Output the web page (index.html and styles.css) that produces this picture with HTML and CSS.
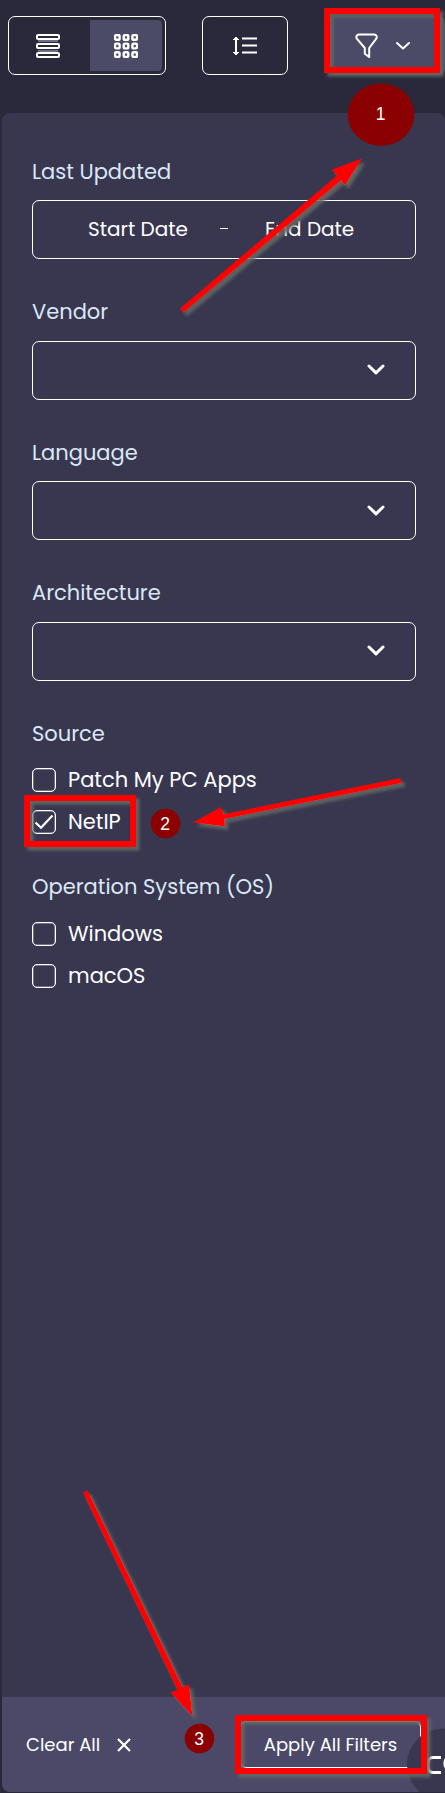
FILE: index.html
```html
<!DOCTYPE html>
<html lang="en">
<head>
<meta charset="utf-8">
<title>Filters</title>
<link rel="stylesheet" href="styles.css">
</head>
<body>
<div class="page">
  <header class="toolbar">
    <div class="toggle">
      <button class="segment" aria-label="List view">
        <svg width="24" height="24" viewBox="0 0 24 24"><g fill="none" stroke="#fff" stroke-width="2"><rect x="1" y="1" width="22" height="4" rx="1"/><rect x="1" y="10" width="22" height="4" rx="1"/><rect x="1" y="19" width="22" height="4" rx="1"/></g><path d="M2 7h20M2 17h20" stroke="#b4b2dc" stroke-width="1"/></svg>
      </button>
      <button class="segment active" aria-label="Grid view">
        <svg width="24" height="24" viewBox="0 0 24 24" fill="none" stroke="#fff" stroke-width="2.400"><rect x="1" y="1" width="4.6" height="4.8" rx="1.4"/><rect x="9.7" y="1" width="4.6" height="4.8" rx="1.4"/><rect x="18.4" y="1" width="4.6" height="4.8" rx="1.4"/><rect x="1" y="9.6" width="4.6" height="4.8" rx="1.4"/><rect x="9.7" y="9.6" width="4.6" height="4.8" rx="1.4"/><rect x="18.4" y="9.6" width="4.6" height="4.8" rx="1.4"/><rect x="1" y="18.2" width="4.6" height="4.8" rx="1.4"/><rect x="9.7" y="18.2" width="4.6" height="4.8" rx="1.4"/><rect x="18.4" y="18.2" width="4.6" height="4.8" rx="1.4"/></svg>
      </button>
    </div>
    <button class="density" aria-label="Row height">
      <svg width="26" height="20" viewBox="0 0 26 20" fill="none" stroke="#fff" stroke-width="2"><path d="M10 2.500H25M10 9.500H25M10 16.500H25M4 3v14"/><path d="M1 4L4 1l3 3M1 16l3 3 3-3" fill="#fff" stroke-width="1"/></svg>
    </button>
    <button class="filter" aria-label="Filter">
      <svg width="24" height="26" viewBox="0 0 24 26" fill="none" stroke="#fff" stroke-width="2" stroke-linejoin="round"><path d="M4 1.500h15c2.500 0 3.300 2.300 2.300 4.200L14.200 15v9l-4.400-3.200V15L1.800 5.700C.7 3.800 1.700 1.500 4 1.500z"/></svg>
      <svg width="16" height="10" viewBox="0 0 16 10" fill="none" stroke="#fff" stroke-width="2" stroke-linecap="round" stroke-linejoin="round"><path d="M2 2l6 5.600L14 2"/></svg>
    </button>
  </header>

  <main class="panel">
    <section class="group">
      <h2 class="label">Last Updated</h2>
      <div class="field dates"><span class="start">Start Date</span><span class="dash"></span><span class="end">End Date</span></div>
    </section>
    <section class="group">
      <h2 class="label">Vendor</h2>
      <div class="field select"><svg class="chevron" viewBox="0 0 18 11"><path d="M2 2l7 6.800L16 2"/></svg></div>
    </section>
    <section class="group">
      <h2 class="label">Language</h2>
      <div class="field select"><svg class="chevron" viewBox="0 0 18 11"><path d="M2 2l7 6.800L16 2"/></svg></div>
    </section>
    <section class="group">
      <h2 class="label">Architecture</h2>
      <div class="field select"><svg class="chevron" viewBox="0 0 18 11"><path d="M2 2l7 6.800L16 2"/></svg></div>
    </section>
    <section class="group checks">
      <h2 class="label">Source</h2>
      <div class="option"><span class="box"></span><span class="name">Patch My PC Apps</span></div>
      <div class="option"><span class="box"><svg width="20" height="18" viewBox="0 0 20 18" fill="none" stroke="#fff" stroke-width="2.200"><path d="M1.500 9.500l5.500 5.200L18.500 2.500"/></svg></span><span class="name">NetIP</span></div>
    </section>
    <section class="group checks systems">
      <h2 class="label">Operation System (OS)</h2>
      <div class="option"><span class="box"></span><span class="name">Windows</span></div>
      <div class="option"><span class="box"></span><span class="name">macOS</span></div>
    </section>
    <footer class="footer">
      <button class="clear"><span class="clear-text">Clear All</span><svg width="14" height="14" viewBox="0 0 14 14" stroke="#fff" stroke-width="2.200"><path d="M1 1l12 12M13 1L1 13"/></svg></button>
      <button class="apply">Apply All Filters</button>
    </footer>
  </main>

  <svg class="chat" width="38" height="64" viewBox="407 1728 38 64">
    <circle cx="443" cy="1764.500" r="36" fill="#38374f"/>
    <path d="M441 1757.500h-8c-4 0-5 2-5 6v3c0 4 2 6 5 6h8" fill="none" stroke="#fff" stroke-width="3"/>
    <path d="M449 1757c-5 2-6 10 0 13" fill="none" stroke="#fff" stroke-width="3"/>
  </svg>

  <svg class="marks" width="445" height="1793" viewBox="0 0 445 1793">
    <defs><filter id="shadow" filterUnits="userSpaceOnUse" x="0" y="0" width="445" height="1793"><feDropShadow dx="3.500" dy="3.500" stdDeviation="1.500" flood-color="#656863" flood-opacity=".9"/></filter></defs>
    <g fill="none" stroke="#f00" stroke-width="6" filter="url(#shadow)">
      <rect x="327" y="11" width="110" height="59"/>
      <rect x="27" y="798" width="106" height="46"/>
      <rect x="238" y="1718" width="186" height="53"/>
    </g>
    <g fill="#f00" filter="url(#shadow)">
      <path d="M180 308.500l3.500 4L341 180.500l4 5 17-27-30 11 5 6z"/>
      <path d="M400.500 778l1 5-177 36 .5 7.500-32-4 28-15.500 2.500 7.300z"/>
      <path d="M83 1492.500l4.500-2 95 196.500 6.500-2.500 3.500 31.500-22-23.500 7-2.500z"/>
    </g>
    <g fill="#8b0000">
      <ellipse cx="381" cy="114.700" rx="33.300" ry="31.300"/>
      <circle cx="165.500" cy="823.500" r="14.800"/>
      <circle cx="199.500" cy="1738.500" r="14.800"/>
    </g>
    <g class="numbers">
      <text x="380.500" y="120">1</text>
      <text x="165" y="829.500">2</text>
      <text x="199" y="1744.500">3</text>
    </g>
  </svg>
</div>
</body>
</html>
```
FILE: styles.css
```css
* { box-sizing: border-box; }
body { margin: 0; background: #29293b; }
.page {
  position: relative;
  display: flex;
  flex-direction: column;
  width: 445px;
  height: 1793px;
  overflow: hidden;
  color: #fff;
  font: 20px/30px Poppins, Inter, "Open Sans", sans-serif;
  font-feature-settings: "cv11", "ss03";
}
button { margin: 0; padding: 0; border: 0; background: none; color: inherit; font: inherit; font-feature-settings: inherit; }
svg { display: block; flex: none; }

.toolbar { display: flex; height: 113px; padding: 16px 0 38px 8px; }
.toggle { display: flex; width: 158px; padding: 3px; border: 1px solid #fff; border-radius: 7px; }
.segment { display: flex; align-items: center; justify-content: center; width: 78px; padding: 1px 6px 0 0; }
.segment.active { width: 72px; padding-right: 0; background: #4b4a67; border-radius: 0 4px 4px 0; }
.density { display: flex; align-items: center; width: 86px; margin-left: 36px; padding-left: 29px; border: 1px solid #fff; border-radius: 7px; }
.filter { display: flex; align-items: center; gap: 16px; width: 115px; margin-left: 42px; padding-left: 25px; border-radius: 7px; background: #4b4a67; }

.panel { display: flex; flex: 1; flex-direction: column; margin: 0 0 1px 2px; padding-top: 43.600px; border-radius: 8px; background: #38374f; overflow: hidden; }
.group { width: 384px; margin: 0 0 37.700px 30px; }
.label { margin: 0 0 13.800px; color: #dbe8f5; font-size: 21px; font-weight: 400; line-height: 30px; white-space: nowrap; }
.field { display: flex; align-items: center; height: 59px; border: 1px solid #fff; border-radius: 7px; white-space: nowrap; }
.dates { padding: 0 0 2px 55px; }
.start { width: 132px; }
.dash { width: 8px; height: 1px; margin-right: 37px; background: #fff; }
.select { justify-content: flex-end; padding: 0 30px 1px 0; }
.chevron { width: 18px; height: 11px; fill: none; stroke: #fff; stroke-width: 3; stroke-linecap: round; stroke-linejoin: round; }
.checks { margin-bottom: 38px; }
.checks .label { margin-bottom: 19px; }
.systems .label { margin-bottom: 20px; }
.option { display: flex; align-items: center; gap: 12px; height: 24px; margin-bottom: 18px; white-space: nowrap; }
.option:last-child { margin-bottom: 0; }
.name { font-size: 21px; }
.box { display: flex; align-items: center; justify-content: center; width: 24px; height: 24px; border: 1px solid #fff; border-radius: 5px; box-shadow: inset 0 0 0 .5px #aaa8d0; }

.footer { display: flex; align-items: center; height: 95px; margin-top: auto; padding-left: 24px; background: #4b4967; font-size: 18px; }
.clear { display: flex; align-items: center; width: 214px; white-space: nowrap; }
.clear-text { width: 91px; text-align: left; }
.apply { width: 181px; height: 47px; border: 1px solid #fff; border-radius: 6px; white-space: nowrap; }

.chat { position: absolute; left: 407px; top: 1728px; }
.marks { position: absolute; left: 0; top: 0; }
.numbers { fill: #fff; font: 17.500px "Liberation Sans", sans-serif; text-anchor: middle; }
```
